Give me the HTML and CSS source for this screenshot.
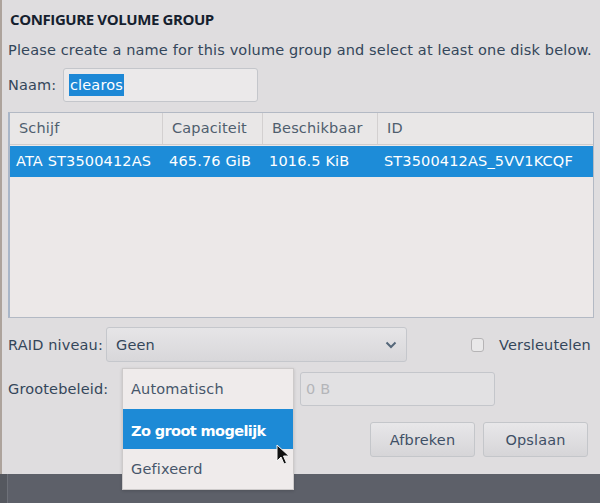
FILE: index.html
```html
<!DOCTYPE html>
<html>
<head>
  <title>Configure Volume Group</title>
  <link rel="stylesheet" href="styles.css">
</head>
<body>
  <div class="screen">
    <div class="dialog">
      <h1 class="title">CONFIGURE VOLUME GROUP</h1>
      <p class="desc">Please create a name for this volume group and select at least one disk below.</p>

      <div class="name-row">
        <span class="label name-label">Naam:</span>
        <div class="entry"><span class="selected-text">clearos</span></div>
      </div>

      <div class="disk-table">
        <div class="table-head">
          <div class="cell">Schijf</div>
          <div class="cell">Capaciteit</div>
          <div class="cell">Beschikbaar</div>
          <div class="cell">ID</div>
        </div>
        <div class="table-row selected">
          <div class="cell">ATA ST3500412AS</div>
          <div class="cell">465.76 GiB</div>
          <div class="cell">1016.5 KiB</div>
          <div class="cell">ST3500412AS_5VV1KCQF</div>
        </div>
      </div>

      <div class="raid-row">
        <span class="label raid-label">RAID niveau:</span>
        <div class="combo">
          <span>Geen</span>
          <svg class="chevron" width="12" height="8" viewBox="0 0 12 8">
            <path d="M1.5 1.5 L6 6 L10.5 1.5" fill="none" stroke="#55677a" stroke-width="2"/>
          </svg>
        </div>
        <div class="check-wrap">
          <span class="checkbox"></span>
          <span class="check-label">Versleutelen</span>
        </div>
      </div>

      <div class="size-row">
        <span class="label size-label">Grootebeleid:</span>
        <div class="entry size-entry">0 B</div>

        <div class="popup">
          <div class="popup-item">Automatisch</div>
          <div class="popup-item active">Zo groot mogelijk</div>
          <div class="popup-item">Gefixeerd</div>
        </div>
      </div>

      <div class="buttons">
        <button class="btn">Afbreken</button>
        <button class="btn">Opslaan</button>
      </div>
    </div>
    <div class="taskbar"></div>

    <svg class="cursor" width="14" height="22" viewBox="0 0 14 22">
      <path d="M1 1 L1 17 L5 13 L8 20 L10.5 19 L7.5 12 L13 12 Z" fill="#111" stroke="#f4f4f4" stroke-width="1"/>
    </svg>
  </div>
</body>
</html>
```

FILE: styles.css
```css
html, body {
  margin: 0;
  padding: 0;
}

body {
  font-family: "DejaVu Sans", "Open Sans", sans-serif;
  font-size: 14.5px;
  letter-spacing: 0.15px;
  color: #34465a;
  background: #dcdadb;
}

.screen {
  position: relative;
  width: 600px;
  height: 503px;
  display: flex;
  flex-direction: column;
  overflow: hidden;
}

.dialog {
  height: 474px;
  box-sizing: border-box;
  padding: 0 6px 0 6px;
  border-left: 2px solid #ada39c;
  background: #dfdddf;
  display: flex;
  flex-direction: column;
}

.title {
  margin: 10px 0 0 2px;
  font-family: "Open Sans", "DejaVu Sans", sans-serif;
  font-size: 15px;
  font-weight: bold;
  line-height: 19px;
  color: #15202e;
  letter-spacing: -0.4px;
}

.desc {
  margin: 12px 0 0 0;
  line-height: 18px;
  white-space: nowrap;
}

.label {
  white-space: nowrap;
}

.name-label {
  width: 55px;
}

.raid-label {
  width: 98px;
}

.size-label {
  width: 292px;
}

.name-row {
  margin-top: 9px;
  display: flex;
  align-items: center;
}

.entry {
  width: 195px;
  height: 34px;
  box-sizing: border-box;
  border: 1px solid #c4c6cb;
  border-radius: 3px;
  background: #ebe9ea;
  display: flex;
  align-items: center;
  padding-left: 5px;
}

.selected-text {
  background: #1d88d6;
  color: #fff;
  padding: 2px 1px;
  line-height: 18px;
}

.disk-table {
  margin-top: 10px;
  height: 206px;
  box-sizing: border-box;
  border: 1px solid #b3b9c4;
  border-left: 2px solid #a9b6c8;
  background: #ece8e8;
}

.table-head,
.table-row {
  display: grid;
  grid-template-columns: 153px 100px 115px 1fr;
}

.table-head {
  height: 31px;
  border-bottom: 1px solid #cfcccc;
  background: #e9e7e7;
  color: #4f5e6e;
}

.table-head .cell {
  padding-left: 9px;
  border-right: 1px solid #d3d0d0;
  line-height: 31px;
}

.table-head .cell:last-child {
  border-right: none;
}

.table-row {
  height: 31px;
  margin-top: 1px;
}

.table-row .cell {
  padding-left: 6px;
  line-height: 31px;
  white-space: nowrap;
}

.table-row.selected {
  background: #1d8cd8;
  color: #fff;
}

.raid-row {
  margin-top: 9px;
  display: flex;
  align-items: center;
}

.combo {
  width: 301px;
  height: 35px;
  box-sizing: border-box;
  border: 1px solid #c5c7cc;
  border-radius: 3px;
  background: linear-gradient(#e6e5e7, #d8d7da);
  display: flex;
  align-items: center;
  justify-content: space-between;
  padding: 0 9px 0 9px;
}

.check-wrap {
  margin-left: 64px;
  display: flex;
  align-items: center;
  gap: 15px;
}

.checkbox {
  width: 13px;
  height: 14px;
  box-sizing: border-box;
  border: 1px solid #b6b4b6;
  border-radius: 3px;
  background: #e9e8e9;
}

.size-row {
  position: relative;
  margin-top: 10px;
  display: flex;
  align-items: center;
}

.size-entry {
  color: #b4b5b9;
  background: #e2e1e3;
}

.popup {
  position: absolute;
  left: 114px;
  top: -4px;
  width: 170px;
  background: #efebeb;
  border: 1px solid #cdcaca;
  box-shadow: 0 1px 3px rgba(0, 0, 0, 0.15);
}

.popup-item {
  height: 40px;
  line-height: 40px;
  padding-left: 8px;
  color: #46566a;
}

.popup-item.active {
  background: #1d8ad6;
  color: #fff;
  font-weight: bold;
  letter-spacing: -0.6px;
  height: 40px;
  line-height: 44px;
}

.buttons {
  margin-top: 16px;
  padding-right: 6px;
  display: flex;
  justify-content: flex-end;
  gap: 8px;
}

.btn {
  width: 105px;
  height: 35px;
  font-family: inherit;
  font-size: 14.5px;
  letter-spacing: 0.15px;
  color: #3f5066;
  border: 1px solid #c4c6ca;
  border-radius: 3px;
  background: linear-gradient(#e8e7e9, #d6d5d8);
}

.taskbar {
  height: 29px;
  background: #5d6069;
  border-left: 7px solid #55585f;
  box-shadow: inset 1px 0 0 #6e7179;
}

.cursor {
  position: absolute;
  left: 276px;
  top: 444px;
}
```
